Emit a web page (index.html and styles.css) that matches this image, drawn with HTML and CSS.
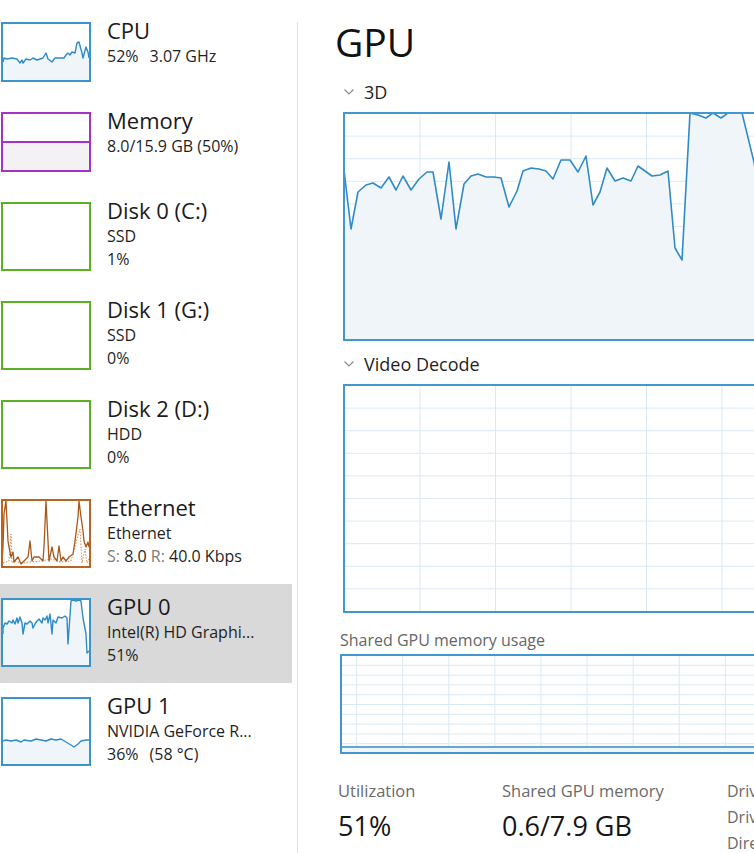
FILE: index.html
```html
<!DOCTYPE html>
<html>
<head>
<meta charset="utf-8">
<title>Task Manager - GPU</title>
<link rel="stylesheet" href="styles.css">
</head>
<body>
<div class="app">
  <nav class="sidebar">
    <div class="item">
      <div class="thumb short blue">
        <svg viewBox="2 2 86 56" preserveAspectRatio="none">
          <polygon class="fill-blue" points="2,40 3,36 6,37 11,36 16,37 19,41 21,38 22,41 25,37 29,38 32,36 36,38 39,37 42,36 45,31 47,37 51,40 54,36 59,36 63,36 65,33 67,31 69,33 71,30 74,31 76,21 78,20 81,31 82,36 85,25 87,30 88,36 88,58 2,58"/>
          <polyline class="line-blue" points="2,40 3,36 6,37 11,36 16,37 19,41 21,38 22,41 25,37 29,38 32,36 36,38 39,37 42,36 45,31 47,37 51,40 54,36 59,36 63,36 65,33 67,31 69,33 71,30 74,31 76,21 78,20 81,31 82,36 85,25 87,30 88,36"/>
        </svg>
      </div>
      <div class="info">
        <div class="name">CPU</div>
        <div class="sub">52%<span class="gap"></span>3.07 GHz</div>
      </div>
    </div>

    <div class="item">
      <div class="thumb short purple">
        <div class="mem-top"></div>
        <div class="mem-fill"></div>
      </div>
      <div class="info">
        <div class="name">Memory</div>
        <div class="sub">8.0/15.9 GB (50%)</div>
      </div>
    </div>

    <div class="item">
      <div class="thumb green"></div>
      <div class="info">
        <div class="name">Disk 0 (C:)</div>
        <div class="sub">SSD</div>
        <div class="sub">1%</div>
      </div>
    </div>

    <div class="item">
      <div class="thumb green"></div>
      <div class="info">
        <div class="name">Disk 1 (G:)</div>
        <div class="sub">SSD</div>
        <div class="sub">0%</div>
      </div>
    </div>

    <div class="item">
      <div class="thumb green"></div>
      <div class="info">
        <div class="name">Disk 2 (D:)</div>
        <div class="sub">HDD</div>
        <div class="sub">0%</div>
      </div>
    </div>

    <div class="item">
      <div class="thumb orange">
        <svg viewBox="2 2 86 65" preserveAspectRatio="none">
          <polyline class="line-orange-dash" points="2,64 8,62 10,35 11,64 14,62 20,64 30,63 40,62 50,60 60,63 70,62 76,40 79,30 81,64 84,50 86,64 88,60"/>
          <polyline class="line-orange" points="1,62 2,48 3,15 5,2 7,42 8,48 10,58 12,53 13,63 17,58 20,65 23,62 27,58 29,42 31,62 33,58 38,58 42,62 43,48 45,2 47,42 48,62 51,48 53,58 56,62 58,47 60,62 62,58 65,62 68,58 72,55 74,42 77,18 78,2 80,18 82,32 83,42 85,48 87,43 88,48"/>
        </svg>
      </div>
      <div class="info">
        <div class="name">Ethernet</div>
        <div class="sub">Ethernet</div>
        <div class="sub"><span class="muted">S:</span> 8.0 <span class="muted">R:</span> 40.0 Kbps</div>
      </div>
    </div>

    <div class="item selected">
      <div class="thumb blue">
        <svg viewBox="2 2 86 65" preserveAspectRatio="none">
          <polygon class="fill-blue" points="2,36 2,30 4,25 6,26 8,23 11,25 12,22 14,26 16,20 17,25 19,19 21,25 22,36 24,25 26,26 29,23 31,25 32,30 34,26 36,23 38,21 41,25 42,20 44,22 46,18 47,25 49,16 51,36 52,22 55,25 57,19 61,20 64,18 66,20 67,46 70,3 72,2 75,3 78,2 80,3 82,20 85,36 86,55 88,53 88,67 2,67"/>
          <polyline class="line-blue" points="2,36 2,30 4,25 6,26 8,23 11,25 12,22 14,26 16,20 17,25 19,19 21,25 22,36 24,25 26,26 29,23 31,25 32,30 34,26 36,23 38,21 41,25 42,20 44,22 46,18 47,25 49,16 51,36 52,22 55,25 57,19 61,20 64,18 66,20 67,46 70,3 72,2 75,3 78,2 80,3 82,20 85,36 86,55 88,53"/>
        </svg>
      </div>
      <div class="info">
        <div class="name">GPU 0</div>
        <div class="sub">Intel(R) HD Graphi...</div>
        <div class="sub">51%</div>
      </div>
    </div>

    <div class="item">
      <div class="thumb blue">
        <svg viewBox="2 2 86 65" preserveAspectRatio="none">
          <polygon class="fill-blue" points="2,44 5,43 10,44 15,43 20,45 23,43 30,44 35,42 40,43 45,44 50,42 55,43 60,42 65,45 70,48 73,50 77,47 80,44 85,43 88,43 88,67 2,67"/>
          <polyline class="line-blue" points="2,44 5,43 10,44 15,43 20,45 23,43 30,44 35,42 40,43 45,44 50,42 55,43 60,42 65,45 70,48 73,50 77,47 80,44 85,43 88,43"/>
        </svg>
      </div>
      <div class="info">
        <div class="name">GPU 1</div>
        <div class="sub">NVIDIA GeForce R...</div>
        <div class="sub">36%<span class="gap"></span>(58 °C)</div>
      </div>
    </div>
  </nav>

  <div class="divider"></div>

  <main class="main">
    <h1 class="title">GPU</h1>

    <div class="section-label">
      <svg class="chevron" viewBox="0 0 10 6"><polyline points="0.5,0.5 5,5 9.5,0.5"/></svg>
      <span>3D</span>
    </div>
    <div class="graph big">
      <svg viewBox="2 2 751 225" preserveAspectRatio="none">
        <polygon class="fill-blue" points="1,58 8,117 15,80 23,73 30,71 38,76 46,65 53,78 60,64 68,78 76,67 84,60 90,60 98,107 106,50 113,117 121,72 128,64 135,62 143,65 151,65 158,66 166,95 174,79 180,59 188,56 196,57 203,59 210,67 218,48 227,48 235,60 243,44 250,93 257,80 264,56 272,69 280,66 288,69 295,54 302,59 309,64 317,63 325,59 332,136 339,148 347,1 355,3 363,6 370,1 378,6 385,1 399,1 411,50 418,90 418,229 1,229"/>
        <polyline class="line-blue main-line" points="1,58 8,117 15,80 23,73 30,71 38,76 46,65 53,78 60,64 68,78 76,67 84,60 90,60 98,107 106,50 113,117 121,72 128,64 135,62 143,65 151,65 158,66 166,95 174,79 180,59 188,56 196,57 203,59 210,67 218,48 227,48 235,60 243,44 250,93 257,80 264,56 272,69 280,66 288,69 295,54 302,59 309,64 317,63 325,59 332,136 339,148 347,1 355,3 363,6 370,1 378,6 385,1 399,1 411,50 418,90"/>
      </svg>
    </div>

    <div class="section-label second">
      <svg class="chevron" viewBox="0 0 10 6"><polyline points="0.5,0.5 5,5 9.5,0.5"/></svg>
      <span>Video Decode</span>
    </div>
    <div class="graph big"></div>

    <div class="shared-label">Shared GPU memory usage</div>
    <div class="graph shared">
      <svg viewBox="2 2 751 96" preserveAspectRatio="none">
        <rect class="fill-blue" x="0" y="93" width="755" height="6"/>
        <line class="line-blue" x1="0" y1="93" x2="755" y2="93"/>
      </svg>
    </div>

    <div class="stats">
      <div class="stat util">
        <div class="stat-label">Utilization</div>
        <div class="stat-value">51%</div>
      </div>
      <div class="stat shm">
        <div class="stat-label">Shared GPU memory</div>
        <div class="stat-value">0.6/7.9 GB</div>
      </div>
      <div class="stat keys">
        <div class="key">Driver version:</div>
        <div class="key">Driver date:</div>
        <div class="key">DirectX version:</div>
      </div>
    </div>
  </main>
</div>
</body>
</html>
```

FILE: styles.css
```css
html, body {
  margin: 0;
  padding: 0;
  background: #ffffff;
  overflow: hidden;
}

body {
  font-family: "Open Sans", "Noto Sans", sans-serif;
  color: #1b1b1b;
  width: 754px;
  height: 853px;
}

.app {
  display: flex;
  height: 853px;
}

/* ---------- sidebar ---------- */
.sidebar {
  flex: none;
  width: 292px;
  padding-top: 8px;
}

.item {
  display: flex;
  align-items: flex-start;
  gap: 16px;
  padding: 14px 0 16px 1px;
}

.item.selected {
  background: #d9d9d9;
}

.thumb {
  flex: none;
  box-sizing: border-box;
  width: 90px;
  height: 69px;
  border: 2px solid;
  background: #ffffff;
  overflow: hidden;
}

.thumb.short {
  height: 60px;
}

.thumb svg {
  display: block;
  width: 100%;
  height: 100%;
}

.thumb.blue { border-color: #3b93cc; }
.thumb.purple {
  border-color: #a233c4;
  display: flex;
  flex-direction: column;
}
.thumb.green { border-color: #5cae22; }
.thumb.orange { border-color: #bb6420; }

.mem-top {
  flex: 1;
}

.mem-fill {
  flex: 1;
  background: #f4f1f4;
  border-top: 2px solid #a233c4;
}

.fill-blue {
  fill: #f0f5fa;
  stroke: none;
}

.line-blue {
  fill: none;
  stroke: #2f8bc6;
  stroke-width: 1.4;
  stroke-linejoin: round;
  vector-effect: non-scaling-stroke;
}

.main-line {
  stroke-width: 1.6;
}

.line-orange {
  fill: none;
  stroke: #a8581a;
  stroke-width: 1.3;
  stroke-linejoin: round;
  vector-effect: non-scaling-stroke;
}

.line-orange-dash {
  fill: none;
  stroke: #d08a52;
  stroke-width: 1;
  stroke-dasharray: 1.5 1.5;
  vector-effect: non-scaling-stroke;
}

.info {
  display: flex;
  flex-direction: column;
  white-space: nowrap;
}

.name {
  font-size: 22px;
  line-height: 20px;
  margin-top: -2px;
  margin-bottom: 5px;
  color: #1a1a1a;
}

.sub {
  font-size: 16px;
  line-height: 23px;
  color: #1f1f1f;
}

.gap {
  display: inline-block;
  width: 11px;
}

.muted {
  color: #7c7c7c;
}

/* ---------- divider ---------- */
.divider {
  flex: none;
  width: 1px;
  margin-left: 5px;
  margin-top: 22px;
  background: #e3e3e3;
}

/* ---------- main ---------- */
.main {
  flex: 1;
  min-width: 0;
  overflow: hidden;
  padding: 18px 0 0 37px;
}

.title {
  margin: 0;
  font-size: 39px;
  line-height: 48px;
  font-weight: 400;
  color: #111111;
}

.section-label {
  display: flex;
  align-items: center;
  gap: 10px;
  margin: 14px 0 8px 9px;
  font-size: 18px;
  line-height: 24px;
  color: #1f1f1f;
  white-space: nowrap;
}

.section-label.second {
  margin-top: 11px;
}

.chevron {
  width: 10px;
  height: 6px;
  display: block;
}

.chevron polyline {
  fill: none;
  stroke: #8a8a8a;
  stroke-width: 1.1;
}

.graph {
  box-sizing: border-box;
  width: 755px;
  border: 2px solid #4198d0;
  background-color: #ffffff;
  overflow: hidden;
}

.graph svg {
  display: block;
  width: 100%;
  height: 100%;
}

.graph.big {
  margin-left: 8px;
  height: 229px;
  background-image:
    linear-gradient(to right, transparent calc(100% - 1px), #d9e9f4 calc(100% - 1px)),
    linear-gradient(to bottom, transparent calc(100% - 1px), #d9e9f4 calc(100% - 1px));
  background-size: 75.5px 22.6px, 75.5px 22.6px;
}

.graph.shared {
  margin-left: 5px;
  height: 100px;
  background-image:
    linear-gradient(to right, transparent calc(100% - 1px), #d9e9f4 calc(100% - 1px)),
    linear-gradient(to bottom, transparent calc(100% - 1px), #d9e9f4 calc(100% - 1px));
  background-size: 46.1px 9.8px, 46.1px 9.8px;
  background-position: -31px 0, 0 0;
}

.shared-label {
  margin: 17px 0 4px 5px;
  font-size: 16px;
  line-height: 20px;
  color: #666666;
  white-space: nowrap;
}

.stats {
  display: flex;
  margin: 26px 0 0 3px;
  white-space: nowrap;
}

.stat.util { flex: none; width: 164px; }
.stat.shm { flex: none; width: 225px; }

.stat-label {
  font-size: 16.5px;
  line-height: 22px;
  color: #6a6a6a;
}

.stat-value {
  margin-top: 7px;
  font-size: 27px;
  line-height: 34px;
  color: #161616;
}

.stat.keys {
  margin-top: -2px;
}

.key {
  font-size: 16px;
  line-height: 26px;
  color: #6a6a6a;
}
```
